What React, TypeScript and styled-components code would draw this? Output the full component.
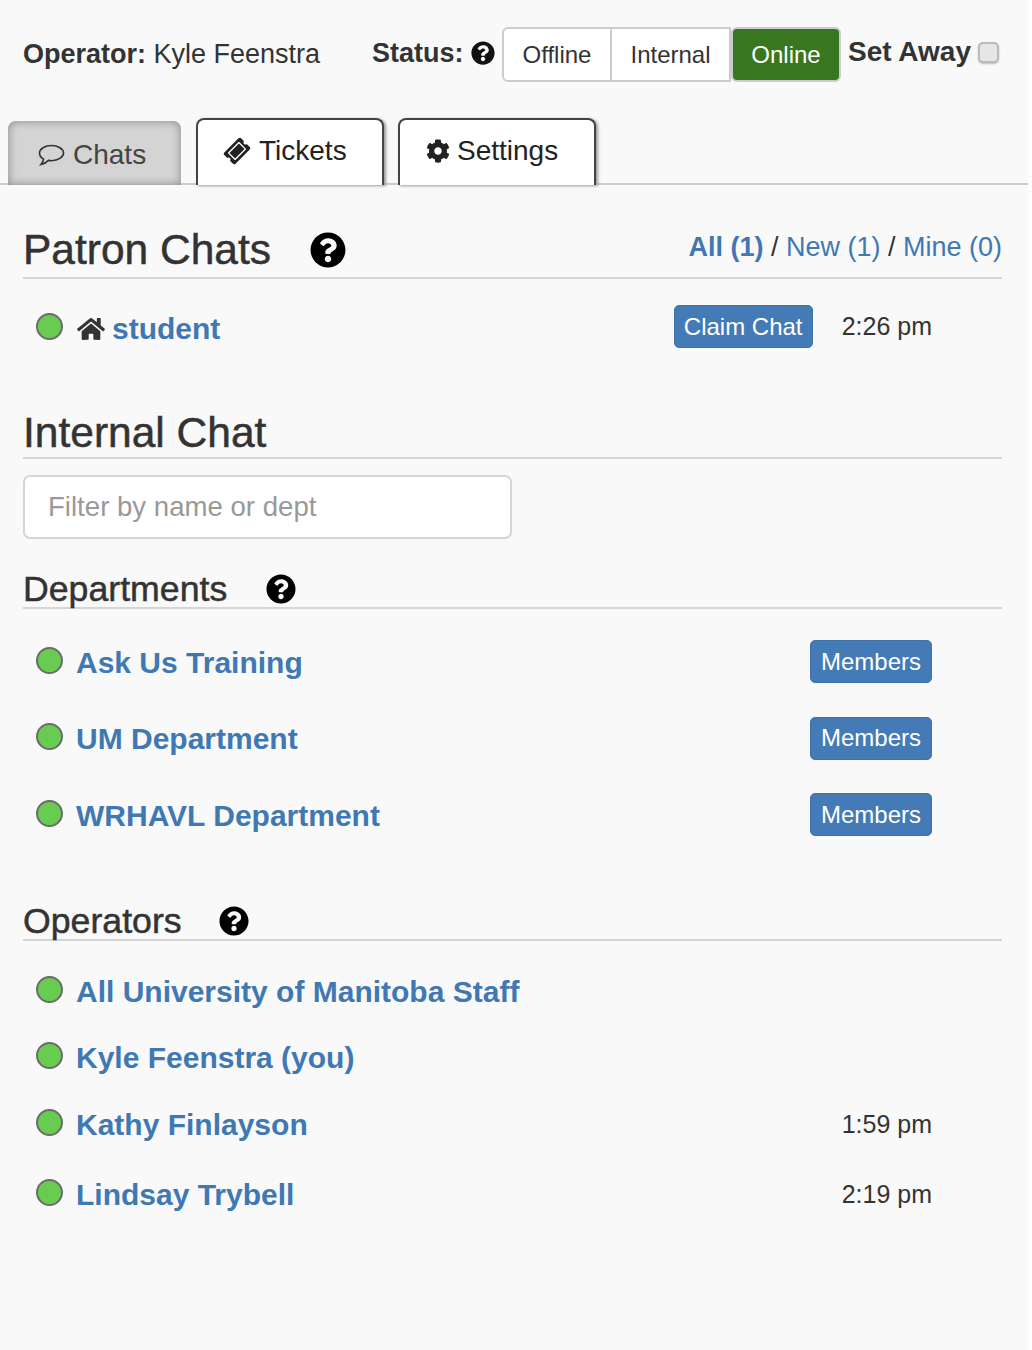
import styled, { createGlobalStyle } from "styled-components";
import { FaCog, FaHome, FaQuestionCircle, FaTicketAlt } from "react-icons/fa";

const GlobalStyle = createGlobalStyle`
  html, body {
    margin: 0;
    background: #fdfdfd;
  }
  body {
    font-family: "Liberation Sans", Arial, sans-serif;
    color: #333;
  }
`;

const Page = styled.div`
  width: 1028px;
  height: 1350px;
  background: #f9f9f9;
`;

const TopBar = styled.div`
  height: 118px;
  box-sizing: border-box;
  padding: 27px 0 0 23px;
  display: flex;
  align-items: flex-start;
`;

const Operator = styled.div`
  width: 349px;
  height: 55px;
  line-height: 55px;
  font-size: 27px;
  white-space: nowrap;
`;

const Label = styled.b`
  font-size: 27px;
`;

const StatusLabel = styled.div`
  display: flex;
  align-items: center;
  gap: 7px;
  width: 130px;
  height: 52px;
  font-size: 27px;
  font-weight: bold;
`;

const StatusGroup = styled.div`
  display: flex;
  height: 55px;
`;

const StatusButton = styled.div<{ $w: number; $on?: boolean }>`
  width: ${(p) => p.$w}px;
  box-sizing: border-box;
  display: flex;
  align-items: center;
  justify-content: center;
  font-size: 24px;
  background: ${(p) => (p.$on ? "#387720" : "#fff")};
  color: ${(p) => (p.$on ? "#fff" : "#333")};
  border: 2px solid #ccc;
  border-left-width: ${(p) => (p.$on ? 2 : 0)}px;
  border-radius: ${(p) => (p.$on ? "6px" : "0")};
  &:first-child {
    border-left-width: 2px;
    border-radius: 6px 0 0 6px;
  }
`;

const AwayLabel = styled.div`
  margin-left: 7px;
  height: 50px;
  line-height: 50px;
  font-size: 28px;
  font-weight: bold;
  white-space: nowrap;
`;

const AwayBox = styled.div`
  width: 21px;
  height: 21px;
  box-sizing: border-box;
  margin: 15px 0 0 7px;
  border: 2px solid #bbb;
  border-radius: 5px;
  background: #e6e6e6;
  box-shadow: 0 1px 2px #bbb;
`;

const Tabs = styled.div`
  height: 67px;
  box-sizing: border-box;
  padding-left: 8px;
  display: flex;
  align-items: flex-end;
  border-bottom: 2px solid #ccc;
`;

const ChatsTab = styled.div`
  width: 173px;
  height: 64px;
  margin: 0 15px -2px 0;
  box-sizing: border-box;
  padding: 3px 0 0 30px;
  display: flex;
  align-items: center;
  gap: 8px;
  font-size: 28px;
  color: #444;
  background: #d4d4d4;
  border-radius: 8px 8px 0 0;
  box-shadow: inset 0 0 10px #888;
`;

const LinkTab = styled.div<{ $w: number }>`
  width: ${(p) => p.$w}px;
  height: 67px;
  margin: 0 14px -2px 0;
  box-sizing: border-box;
  padding: 0 0 3px 26px;
  display: flex;
  align-items: center;
  gap: 7px;
  font-size: 28px;
  color: #222;
  background: #fff;
  border: 2px solid #444;
  border-bottom: 0;
  border-radius: 8px 8px 0 0;
  box-shadow: 2px 1px 3px #999;
`;

const TicketIcon = styled(FaTicketAlt)`
  transform: rotate(-45deg);
  margin: 0 3px 0 1px;
`;

const Heading = styled.div<{ $h: number; $mt: number; $size: number; $pt?: number }>`
  height: ${(p) => p.$h}px;
  margin: ${(p) => p.$mt}px 26px 0 23px;
  padding-top: ${(p) => p.$pt ?? 0}px;
  display: flex;
  align-items: center;
  justify-content: space-between;
  font-size: ${(p) => p.$size}px;
  border-bottom: 2px solid #d5d5d5;
  color: #333;
  -webkit-text-stroke: 0.5px #333;
`;

const HeadingLeft = styled.div<{ $gap: number }>`
  display: flex;
  align-items: center;
  gap: ${(p) => p.$gap}px;
`;

const Filters = styled.div`
  margin-top: -6px;
  font-size: 27px;
  color: #333;
  -webkit-text-stroke: 0;
`;

const Filter = styled.span<{ $on?: boolean }>`
  color: #3f78b3;
  font-weight: ${(p) => (p.$on ? "bold" : "normal")};
`;

const Input = styled.input`
  display: block;
  width: 489px;
  height: 64px;
  box-sizing: border-box;
  margin: 16px 0 0 23px;
  padding: 0 23px;
  font-family: inherit;
  font-size: 27.6px;
  color: #333;
  background: #fff;
  border: 2px solid #d5d5d5;
  border-radius: 7px;
  &::placeholder {
    color: #999;
    opacity: 1;
  }
`;

const List = styled.div<{ $pt: number }>`
  padding-top: ${(p) => p.$pt}px;
`;

const Row = styled.div<{ $h: number }>`
  height: ${(p) => p.$h}px;
  padding: 0 96px 0 36px;
  display: flex;
  align-items: center;
`;

const Dot = styled.span`
  width: 27px;
  height: 27px;
  box-sizing: border-box;
  flex-shrink: 0;
  margin: -3px 14px 0 0;
  border-radius: 50%;
  background: #67cc50;
  border: 2px solid #6b6b6b;
`;

const Home = styled(FaHome)`
  color: #333;
  margin: 2px 8px 0 0;
`;

const Name = styled.a`
  font-size: 30px;
  font-weight: bold;
  color: #3f78b3;
  line-height: 36px;
  margin: 2px 0 0 -1px;
`;

const Right = styled.div<{ $mt?: number }>`
  margin: ${(p) => p.$mt ?? 0}px 0 0 auto;
  display: flex;
  align-items: center;
  gap: 29px;
`;

const Time = styled.span`
  font-size: 25px;
  color: #333;
`;

const Button = styled.div<{ $w: number }>`
  width: ${(p) => p.$w}px;
  height: 43px;
  box-sizing: border-box;
  display: flex;
  align-items: center;
  justify-content: center;
  font-size: 24px;
  color: #fff;
  background: #447ab5;
  border: 1px solid #3f72a8;
  border-radius: 5px;
`;

const departments = ["Ask Us Training", "UM Department", "WRHAVL Department"];

const operators = [
  { name: "All University of Manitoba Staff", h: 66 },
  { name: "Kyle Feenstra (you)", h: 66 },
  { name: "Kathy Finlayson", time: "1:59 pm", h: 68 },
  { name: "Lindsay Trybell", time: "2:19 pm", h: 72 },
];

const CommentIcon = () => (
  <svg width="27" height="24" viewBox="0 0 27 24" fill="none" stroke="#333" strokeWidth="1.6">
    <path d="M13.5 2.5c6.6 0 12 3.5 12 7.6s-5.400 7.600-12 7.600c-1 0-2-.1-3-.3-1.600 1.700-4 3.300-7.500 4.100 1.300-1.500 2.300-3.200 2.600-5.300C3 14.800 1.500 12.600 1.500 10.100 1.500 6 6.900 2.500 13.500 2.500z" />
  </svg>
);

const App = () => {
  return (
    <Page>
      <GlobalStyle />
      <TopBar>
        <Operator>
          <Label>Operator:</Label> Kyle Feenstra
        </Operator>
        <StatusLabel>
          Status: <FaQuestionCircle size={24} color="#111" />
        </StatusLabel>
        <StatusGroup>
          <StatusButton $w={110}>Offline</StatusButton>
          <StatusButton $w={119}>Internal</StatusButton>
          <StatusButton $w={110} $on>
            Online
          </StatusButton>
        </StatusGroup>
        <AwayLabel>Set Away</AwayLabel>
        <AwayBox />
      </TopBar>

      <Tabs>
        <ChatsTab>
          <CommentIcon />
          Chats
        </ChatsTab>
        <LinkTab $w={188}>
          <TicketIcon size={24} />
          Tickets
        </LinkTab>
        <LinkTab $w={198}>
          <FaCog size={24} />
          Settings
        </LinkTab>
      </Tabs>

      <Heading $h={54} $pt={2} $mt={36} $size={42.5}>
        <HeadingLeft $gap={39}>
          Patron Chats <FaQuestionCircle size={36} color="#000" />
        </HeadingLeft>
        <Filters>
          <Filter $on>All (1)</Filter> / <Filter>New (1)</Filter> / <Filter>Mine (0)</Filter>
        </Filters>
      </Heading>
      <List $pt={0}>
        <Row $h={98}>
          <Dot />
          <Home size={28} />
          <Name>student</Name>
          <Right $mt={-3}>
            <Button $w={139}>Claim Chat</Button>
            <Time>2:26 pm</Time>
          </Right>
        </Row>
      </List>

      <Heading $h={49} $pt={3} $mt={28} $size={42.5}>
        Internal Chat
      </Heading>
      <Input placeholder="Filter by name or dept" />

      <Heading $h={36} $mt={32} $size={35.7}>
        <HeadingLeft $gap={39}>
          Departments <FaQuestionCircle size={30} color="#000" />
        </HeadingLeft>
      </Heading>
      <List $pt={14.5}>
        {departments.map((name) => (
          <Row key={name} $h={76.5}>
            <Dot />
            <Name>{name}</Name>
            <Right>
              <Button $w={122}>Members</Button>
            </Right>
          </Row>
        ))}
      </List>

      <Heading $h={36} $pt={2} $mt={48} $size={35.7}>
        <HeadingLeft $gap={37}>
          Operators <FaQuestionCircle size={30} color="#000" />
        </HeadingLeft>
      </Heading>
      <List $pt={17}>
        {operators.map((op) => (
          <Row key={op.name} $h={op.h}>
            <Dot />
            <Name>{op.name}</Name>
            {op.time && (
              <Right>
                <Time>{op.time}</Time>
              </Right>
            )}
          </Row>
        ))}
      </List>
    </Page>
  );
};

export default App;
